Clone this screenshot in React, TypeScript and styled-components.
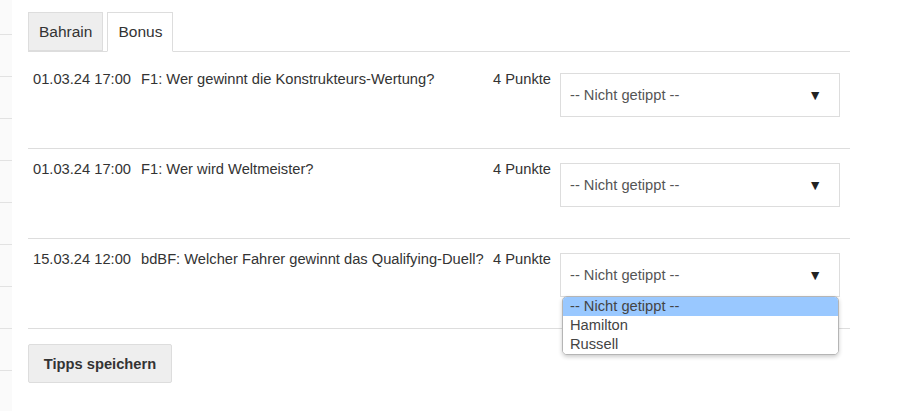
import React from "react";
import styled, { createGlobalStyle } from "styled-components";

const GlobalStyle = createGlobalStyle`
  html, body {
    margin: 0;
    padding: 0;
    background: #fff;
  }
  body {
    font-family: "Liberation Sans", Arial, sans-serif;
    font-size: 14px;
    color: #333;
  }
`;

const Page = styled.div`
  display: flex;
  width: 915px;
  height: 411px;
  overflow: hidden;
`;

const Sidebar = styled.div`
  width: 12px;
  flex-shrink: 0;
  background: #fafafa;
  display: flex;
  flex-direction: column;
`;

const SideItem = styled.div<{ $first?: boolean }>`
  height: ${(p) => (p.$first ? 34 : 41)}px;
  flex-shrink: 0;
  border-bottom: 1px solid #e2e2e2;
`;

const Main = styled.div`
  width: 822px;
  margin-left: 16px;
  padding-top: 12px;
`;

const TabBar = styled.div`
  display: flex;
  gap: 4px;
  border-bottom: 1px solid #ddd;
  height: 39px;
`;

const Tab = styled.div<{ $active?: boolean }>`
  display: flex;
  align-items: center;
  padding: 0 10px;
  font-size: 15.5px;
  color: #333;
  border: 1px solid #ddd;
  border-bottom-color: ${(p) => (p.$active ? "#fff" : "#ddd")};
  background: ${(p) => (p.$active ? "#fff" : "#eee")};
  height: ${(p) => (p.$active ? 40 : 39)}px;
  box-sizing: border-box;
`;

const TabContent = styled.div`
  padding-top: 7px;
`;

const Row = styled.div`
  display: grid;
  grid-template-columns: 108px 352px 67px 1fr;
  padding: 10px 0 31px;
  border-bottom: 1px solid #ddd;
`;

const Cell = styled.div`
  padding: 2px 5px 0;
  font-size: 14.7px;
  line-height: 17px;
  white-space: nowrap;
`;

const SelectCell = styled.div`
  padding: 4px 5px 0;
  position: relative;
`;

const SelectBox = styled.div`
  width: 280px;
  height: 44px;
  box-sizing: border-box;
  border: 1px solid #ddd;
  background: #fff;
  display: flex;
  align-items: center;
  justify-content: space-between;
  padding: 0 17px 0 9px;
  font-size: 14.7px;
  color: #555;
`;

const Arrow = styled.span`
  font-size: 14px;
  color: #222;
`;

const Dropdown = styled.div`
  position: absolute;
  left: 7px;
  top: 47px;
  width: 277px;
  box-sizing: border-box;
  background: #fff;
  border: 1px solid #b5b5b5;
  border-radius: 5px;
  box-shadow: 0 2px 4px rgba(0, 0, 0, 0.2);
  overflow: hidden;
  z-index: 2;
`;

const Option = styled.div<{ $selected?: boolean }>`
  height: 19px;
  line-height: 19px;
  padding-left: 7px;
  font-size: 14.7px;
  color: #444;
  background: ${(p) => (p.$selected ? "#99c8ff" : "#fff")};
`;

const SaveButton = styled.button`
  margin-top: 15px;
  width: 144px;
  height: 39px;
  border: 1px solid #ddd;
  border-radius: 2px;
  background: #eee;
  font-family: "Liberation Sans", Arial, sans-serif;
  font-size: 14.7px;
  font-weight: bold;
  color: #333;
  cursor: pointer;
`;

const questions = [
  { date: "01.03.24 17:00", text: "F1: Wer gewinnt die Konstrukteurs-Wertung?", open: false },
  { date: "01.03.24 17:00", text: "F1: Wer wird Weltmeister?", open: false },
  { date: "15.03.24 12:00", text: "bdBF: Welcher Fahrer gewinnt das Qualifying-Duell?", open: true },
];

export default function App() {
  return (
    <Page>
      <GlobalStyle />
      <Sidebar>
        <SideItem $first />
        {Array.from({ length: 9 }).map((_, i) => (
          <SideItem key={i} />
        ))}
      </Sidebar>
      <Main>
        <TabBar>
          <Tab>Bahrain</Tab>
          <Tab $active>Bonus</Tab>
        </TabBar>
        <TabContent>
          {questions.map((q, i) => (
            <Row key={i}>
              <Cell>{q.date}</Cell>
              <Cell>{q.text}</Cell>
              <Cell>4 Punkte</Cell>
              <SelectCell>
                <SelectBox>
                  <span>-- Nicht getippt --</span>
                  <Arrow>▼</Arrow>
                </SelectBox>
                {q.open && (
                  <Dropdown>
                    <Option $selected>-- Nicht getippt --</Option>
                    <Option>Hamilton</Option>
                    <Option>Russell</Option>
                  </Dropdown>
                )}
              </SelectCell>
            </Row>
          ))}
          <SaveButton>Tipps speichern</SaveButton>
        </TabContent>
      </Main>
    </Page>
  );
}
